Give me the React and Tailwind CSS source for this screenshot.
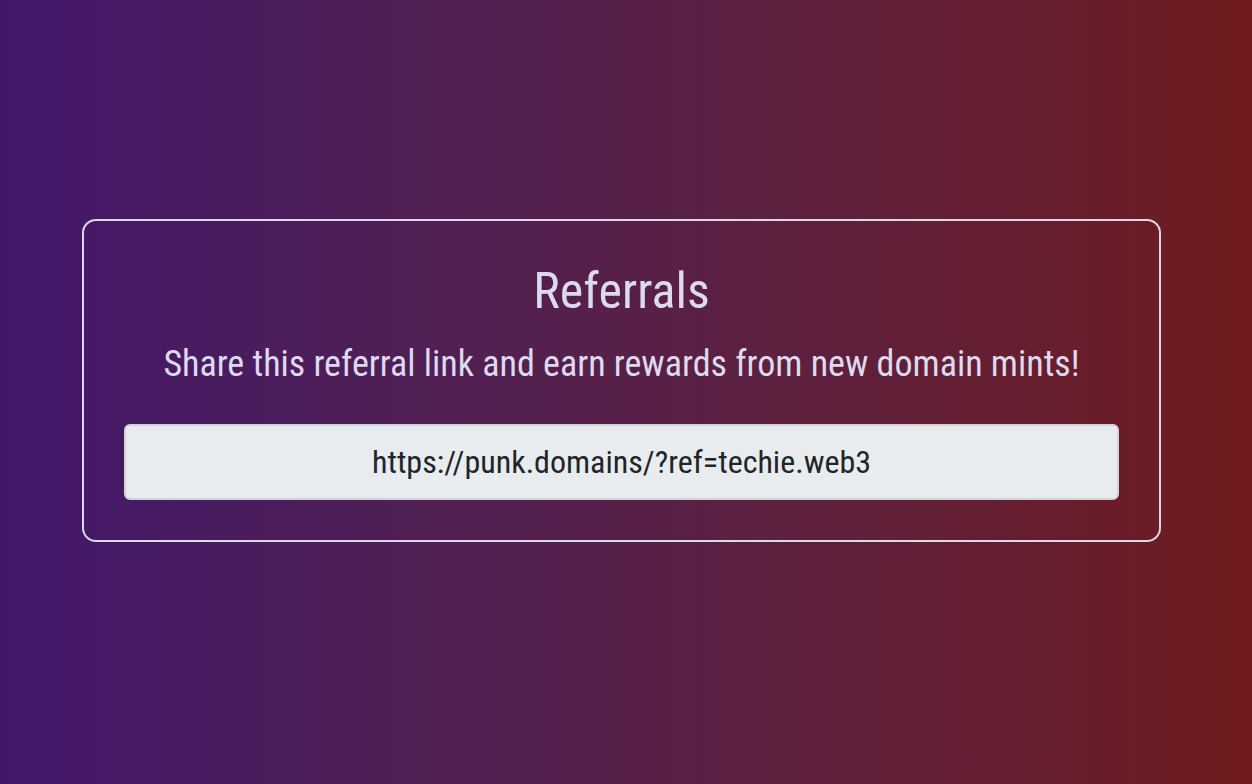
export default function App() {
  const refLink = 'https://punk.domains/?ref=techie.web3';

  return (
    <div className="min-h-[784px] w-full bg-gradient-to-r from-[#42166b] to-[#6f1a1d] font-['Roboto',sans-serif] font-stretch-condensed">
      <div className="pt-[219px] pl-[82px] pr-[91px]">
        <div className="rounded-[14px] border-2 border-[#dcd8ec] px-10 pt-10 pb-10 text-center text-[#dedaee]">
          <h1 className="text-[50px] leading-[1.2] font-normal">Referrals</h1>
          <p className="mt-[22px] text-[36px] leading-[1.2]">
            Share this referral link and earn rewards from new domain mints!
          </p>
          <input
            readOnly
            value={refLink}
            className="mt-[38px] block h-[76px] w-full rounded-[6px] border-2 border-[#ced4da] bg-[#e9ecef] px-4 text-center text-[32px] text-[#212529] outline-none"
          />
        </div>
      </div>
    </div>
  );
}
